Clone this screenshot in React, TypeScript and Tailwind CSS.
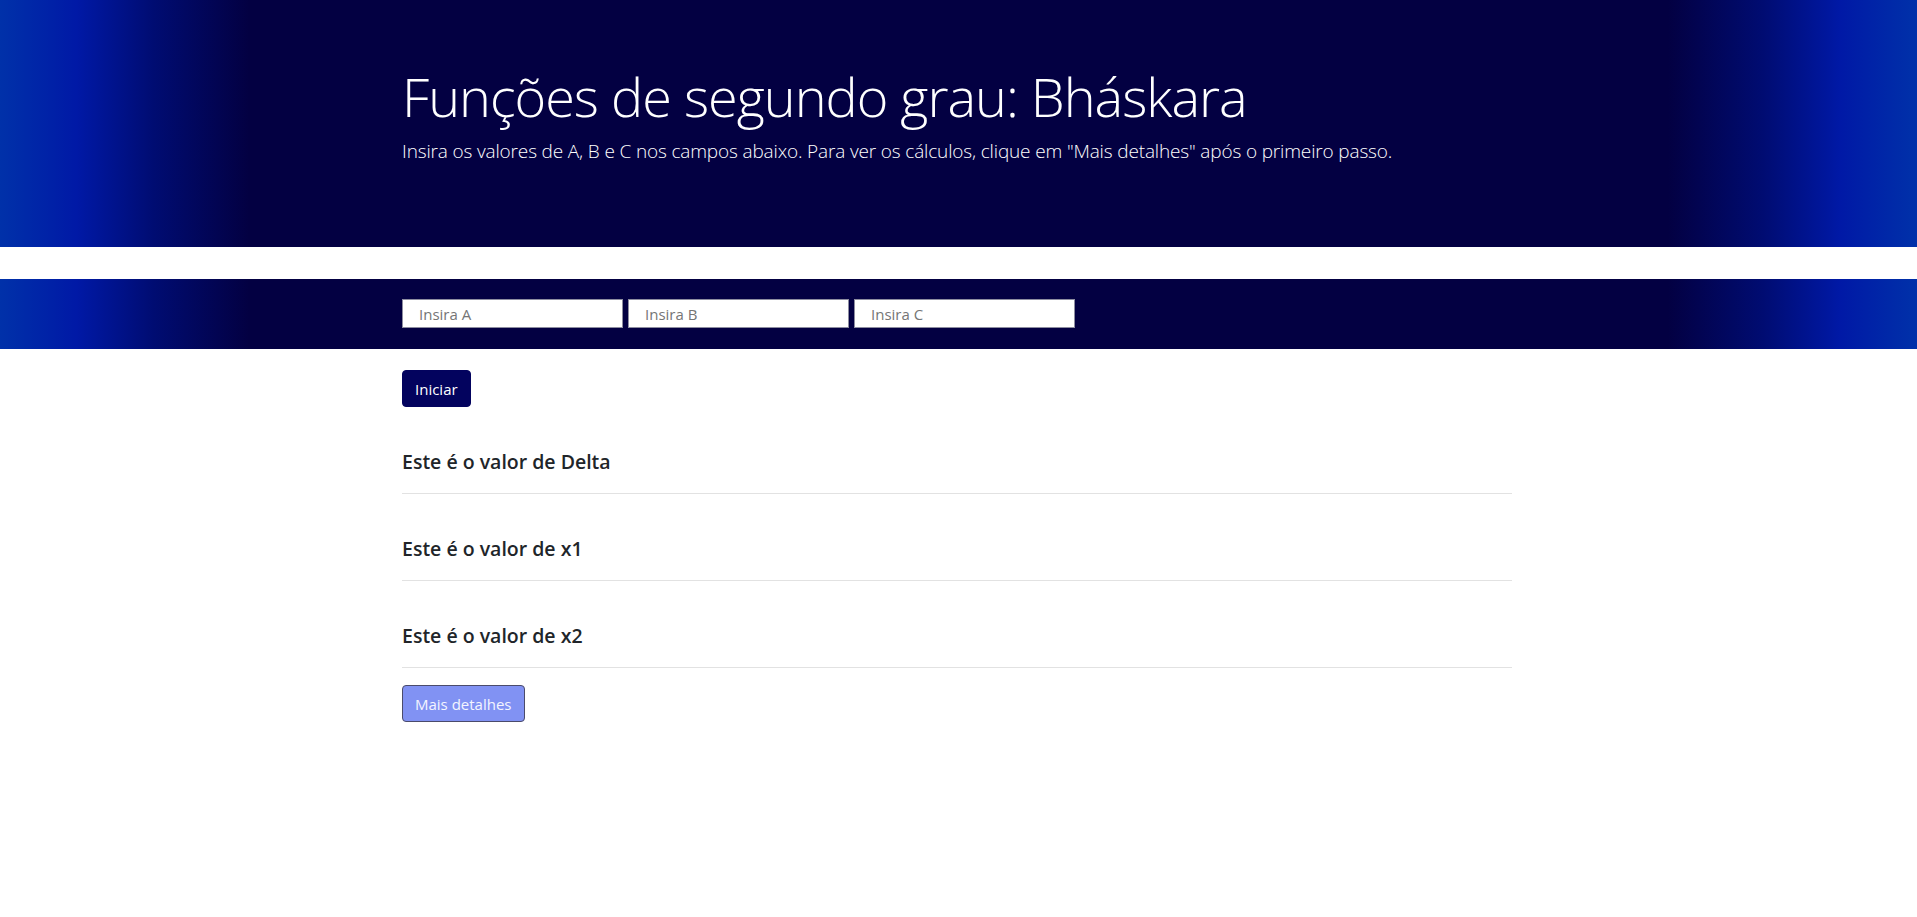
import React from "react";

const band =
  "bg-[linear-gradient(90deg,#0031a9_0%,#0019a6_4%,#000c72_8%,#030042_13%,#030042_87%,#000c72_92%,#0019a6_96%,#0031a9_100%)]";

function Section({ title }: { title: string }) {
  return (
    <div>
      <h5 className="mt-[43px] text-[19.5px] leading-[24px] font-semibold text-[#212529]">
        {title}
      </h5>
      <hr className="mt-[19px] border-0 border-t border-[#e2e2e2]" />
    </div>
  );
}

export default function App() {
  return (
    <div className="min-h-screen bg-white font-['Open_Sans','Noto_Sans',sans-serif]">
      <header className={`${band} pt-16 pb-[66px] mb-8`}>
        <div className="mx-auto w-[1113px]">
          <h1 className="text-[54px] leading-[1.2] font-light text-white mb-2 tracking-[-1px]">
            Funções de segundo grau: Bháskara
          </h1>
          <p className="text-[19px] leading-[1.5] font-light text-white mb-4 tracking-[-0.15px]">
            Insira os valores de A, B e C nos campos abaixo. Para ver os cálculos, clique em "Mais detalhes" após o primeiro passo.
          </p>
        </div>
      </header>

      <section className={`${band} pt-5 pb-[21px]`}>
        <div className="mx-auto w-[1113px] flex gap-[5px]">
          {["Insira A", "Insira B", "Insira C"].map((p) => (
            <input
              key={p}
              placeholder={p}
              className="w-[221px] h-[29px] bg-white border border-[#8d8da0] pl-4 text-[15px] text-[#333] placeholder:text-[#757575] outline-none"
            />
          ))}
        </div>
      </section>

      <main className="mx-auto w-[1113px] pt-[21px] pb-16">
        <div className="w-[1110px]">
          <button className="h-[37px] px-3 rounded-[4px] bg-[#03035e] border border-[#03035e] text-white text-[15px] leading-[1.5]">
            Iniciar
          </button>
          <Section title="Este é o valor de Delta" />
          <Section title="Este é o valor de x1" />
          <Section title="Este é o valor de x2" />
          <button className="mt-[17px] h-[37px] px-3 rounded-[4px] bg-[#8192f3] border border-[#4b4b6b] text-[#f4f5ff] text-[15px] leading-[1.5]">
            Mais detalhes
          </button>
        </div>
      </main>
    </div>
  );
}
